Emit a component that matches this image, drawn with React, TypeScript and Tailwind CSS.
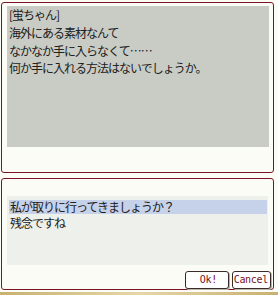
const jp = { fontFamily: '"Noto Sans CJK JP", "DejaVu Sans", sans-serif' };
const pix = { fontFamily: '"DejaVu Sans Mono", "Liberation Mono", monospace' };

const lines = ['[蛍ちゃん]', '海外にある素材なんて', 'なかなか手に入らなくて……', '何か手に入れる方法はないでしょうか。'];

function Btn({ label, w, pr }: { label: string; w: string; pr: string }) {
  return (
    <button
      className={`${w} ${pr} h-[18px] rounded-[3px] border border-[#3a2a2a] bg-white flex items-center justify-end text-[10px] tracking-[-0.3px] leading-none text-[#7a1020] shadow-[1px_1px_0_#b9b4a8]`}
      style={pix}
    >
      {label}
    </button>
  );
}

export default function App() {
  return (
    <div className="w-[278px] h-[295px] bg-[#fbfcf6] flex flex-col overflow-hidden">
      <div className="flex-1 flex flex-col pt-[2px] pl-[1px] pr-[4px]">
        <div className="h-[171px] rounded-[3px] border border-[#7a1424] bg-[#fbfcf6] pt-[3px] pl-[5px] pr-[4px]">
          <div
            className="h-[141px] bg-[#c9ccc5] pl-[2px] text-[12px] leading-[17.8px] text-[#202020] tracking-[-1px]"
            style={jp}
          >
            {lines.map((l) => (
              <div key={l}>{l}</div>
            ))}
          </div>
        </div>
        <div className="mt-[5px] h-[112px] rounded-[3px] border border-[#7a1424] bg-[#fbfcf6] pt-[17px] pl-[5px] pr-[5px] flex flex-col">
          <div
            className="h-[70px] bg-[#eef0eb] pt-[4px] pl-[2px] pr-[1px] text-[12px] text-[#202020] tracking-[-1px]"
            style={jp}
          >
            <div className="bg-[#c6d1ea] pl-[1px] h-[14px] leading-[14px]">私が取りに行ってきましょうか？</div>
            <div className="pl-[1px] mt-[2px] leading-[14px]">残念ですね</div>
          </div>
          <div className="flex justify-end gap-[3px] mt-[6px] -mr-[3px]">
            <Btn label="Ok!" w="w-[44px]" pr="pr-[11px]" />
            <Btn label="Cancel" w="w-[39px]" pr="pr-[2px]" />
          </div>
        </div>
      </div>
      <div className="h-[3px] bg-gradient-to-r from-[#c8b070] via-[#e6d6a8] to-[#c8b070]" />
    </div>
  );
}
